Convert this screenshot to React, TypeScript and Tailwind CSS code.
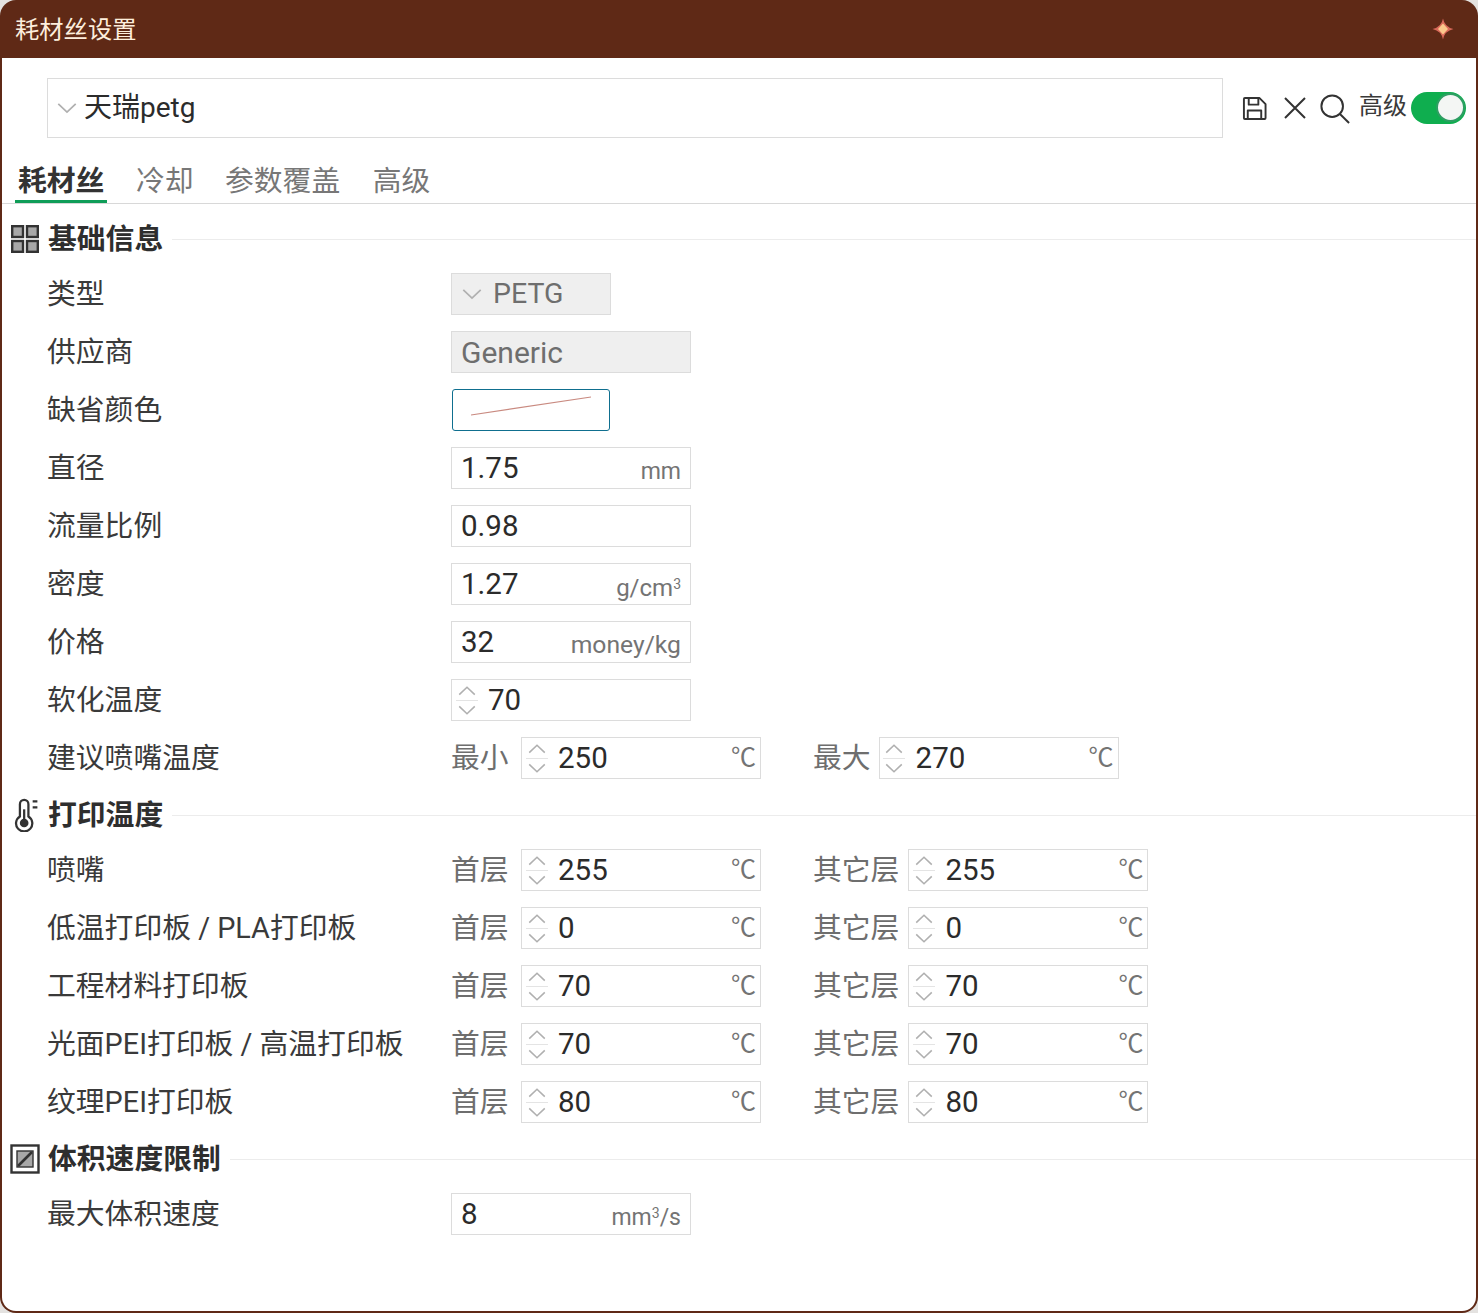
const FONT = "font-['Roboto','Noto_Sans_CJK_SC',sans-serif]";

function Chevron({ up = false, className = "" }: { up?: boolean; className?: string }) {
  return (
    <svg viewBox="0 0 22 12" className={className} fill="none" stroke="#b0b0b0" strokeWidth="1.9">
      <path d={up ? "M1.5 11 L11 2 L20.5 11" : "M1.5 1 L11 10 L20.5 1"} />
    </svg>
  );
}

function Spin() {
  return (
    <div className="flex h-full w-[26px] shrink-0 flex-col items-center justify-center pl-[3px]">
      <Chevron up className="h-[11px] w-[18px]" />
      <div className="my-[4px] h-px w-[22px] bg-[#e4e4e4]" />
      <Chevron className="h-[11px] w-[18px]" />
    </div>
  );
}

function Unit({ size = "text-[24px]", children }: { size?: string; children: React.ReactNode }) {
  return <span className={`ml-auto mt-[7px] leading-none text-[#747474] ${size}`}>{children}</span>;
}

function TextInput({ value, unit, unitSize }: { value: string; unit?: React.ReactNode; unitSize?: string }) {
  return (
    <div className="mt-[2px] flex h-[42px] w-[240px] items-center border border-[#dcdcdc] bg-white pl-[9px] pr-[9px] text-[29.5px] text-[#2b2b2b]">
      <span>{value}</span>
      {unit && <Unit size={unitSize}>{unit}</Unit>}
    </div>
  );
}

function SpinInput({ value, unit = true }: { value: string; unit?: boolean }) {
  return (
    <div className="mt-[2px] flex h-[42px] w-[240px] items-center border border-[#dcdcdc] bg-white pr-[4px] text-[29.5px] text-[#2b2b2b]">
      <Spin />
      <span className="ml-[10px]">{value}</span>
      {unit && <span className="mb-[2px] ml-auto text-[25px] leading-none text-[#747474]">℃</span>}
    </div>
  );
}

function Row({ label, children }: { label: string; children: React.ReactNode }) {
  return (
    <div className="flex h-[58px] items-center pl-[45px]">
      <div className="mt-[4px] w-[404px] shrink-0 text-[28.8px] text-[#3a3a3a]">{label}</div>
      {children}
    </div>
  );
}

function Pair({ a, b, second = "其它层", gap = "mr-[9px]" }: { a: string; b: string; second?: string; gap?: string }) {
  return (
    <>
      <span className="mr-[12px] mt-[4px] w-[58px] text-[28.8px] text-[#6e6e6e]">{second === "最大" ? "最小" : "首层"}</span>
      <SpinInput value={a} />
      <span className={`ml-[52px] mt-[4px] text-[28.8px] text-[#6e6e6e] ${gap}`}>{second}</span>
      <SpinInput value={b} />
    </>
  );
}

function Header({ icon, title }: { icon: React.ReactNode; title: string }) {
  return (
    <div className="flex h-[54px] items-center pl-[8px] pt-[2px]">
      <div className="mt-[2px] flex w-[38px] shrink-0 justify-start">{icon}</div>
      <span className="mt-[4px] text-[28.8px] font-bold text-[#2e2e2e]">{title}</span>
      <div className="ml-[9px] mt-[2px] h-px flex-1 bg-[#ececec]" />
    </div>
  );
}

const GridIcon = (
  <svg className="ml-px" width="28" height="28" viewBox="0 0 28 28" fill="#a8a8a8" stroke="#333" strokeWidth="2.4">
    <rect x="1.2" y="1.2" width="10.8" height="10.8" />
    <rect x="16" y="1.2" width="10.8" height="10.8" />
    <rect x="1.2" y="16" width="10.8" height="10.8" />
    <rect x="16" y="16" width="10.8" height="10.8" />
  </svg>
);

const ThermoIcon = (
  <svg width="26" height="34" viewBox="0 0 26 36" fill="none" stroke="#333" strokeWidth="2.4" className="ml-[4px]">
    <path d="M5.5 19.5 V6.5 a4.5 4.5 0 0 1 9 0 V19.5 a8.6 8.6 0 1 1 -9 0 Z" />
    <circle cx="10" cy="26.5" r="3.4" fill="#333" />
    <path d="M10 24 V12" />
    <path d="M19 3.5 H24 M19 10 H24" />
  </svg>
);

const VolumeIcon = (
  <svg width="30" height="30" viewBox="0 0 30 30" fill="none">
    <rect x="1.5" y="1.5" width="27" height="27" stroke="#333" strokeWidth="2.4" />
    <rect x="7" y="7" width="16" height="16" fill="#a8a8a8" stroke="#333" strokeWidth="1.4" />
    <path d="M8 22 L22 8" stroke="#333" strokeWidth="2.6" />
  </svg>
);

export default function App() {
  return (
    <div className={`${FONT} h-[1313px] w-[1478px] overflow-hidden bg-[#e4e2e0]`}>
      <div className="flex h-full flex-col overflow-hidden rounded-[16px] bg-[#5f2916]">
        <div className="flex h-[58px] shrink-0 items-center pl-[15px] pr-[24px]">
          <span className="mt-[2px] text-[24.3px] text-[#fdeedd]">耗材丝设置</span>
          <svg className="ml-auto" width="22" height="22" viewBox="0 0 22 22">
            <path d="M11 0.5 Q12.5 9 21.5 11 Q12.5 13 11 21.5 Q9.5 13 0.5 11 Q9.5 9 11 0.5 Z" fill="#d9695a" />
            <path d="M11 5.5 L16 11 L11 16.5 L6 11 Z" fill="#fbc88c" />
          </svg>
        </div>
        <div className="mx-[2px] mb-[2px] flex-1 overflow-hidden rounded-b-[14px] bg-white">
          <div className="flex items-center pl-[45px] pt-[20px]">
            <div className="flex h-[60px] w-[1176px] items-center border border-[#dcdcdc] pl-[8px] text-[28px] text-[#2b2b2b]">
              <Chevron className="mt-[1px] h-[11px] w-[22px]" />
              <span className="ml-[6px]">天瑞petg</span>
            </div>
            <svg className="ml-[19px]" width="25" height="25" viewBox="0 0 26 26" fill="none" stroke="#333" strokeWidth="2" strokeLinejoin="round">
              <path d="M2 3 a1 1 0 0 1 1 -1 H18 L24.5 8.5 V23 a1 1 0 0 1 -1 1 H3 a1 1 0 0 1 -1 -1 Z" />
              <path d="M7 2 V9 H17 V2 M6 24 V15 H20 V24" />
            </svg>
            <svg className="ml-[17px]" width="22" height="22" viewBox="0 0 22 22" fill="none" stroke="#333" strokeWidth="2">
              <path d="M1 1 L21 21 M21 1 L1 21" />
            </svg>
            <svg className="ml-[14px] mt-[2px]" width="30" height="30" viewBox="0 0 32 32" fill="none" stroke="#333" strokeWidth="2.1">
              <circle cx="13" cy="13" r="11.5" />
              <path d="M21 21 L31 31" />
            </svg>
            <span className="mb-[4px] ml-[9px] text-[24px] leading-none text-[#3a3a3a]">高级</span>
            <div className="ml-[4px] mb-[1px] flex h-[32px] w-[55px] items-center justify-end rounded-full bg-[#0fae4f] pr-[1px]">
              <div className="h-[29px] w-[29px] rounded-full border-2 border-[#2f9e63] bg-[#f4f6f4]" />
            </div>
          </div>

          <div className="mt-[22px] flex h-[44px] items-end gap-[25.5px] border-b border-[#d8d8d8] pl-[13px] text-[28.8px] leading-none">
            <div className="border-b-[3px] border-[#0f9d58] px-[3px] pb-[4px] font-bold text-[#333]">耗材丝</div>
            <div className="border-b-[3px] border-transparent px-[3px] pb-[4px] text-[#777]">冷却</div>
            <div className="border-b-[3px] border-transparent px-[3px] pb-[4px] text-[#777]">参数覆盖</div>
            <div className="ml-[1px] border-b-[3px] border-transparent px-[3px] pb-[4px] text-[#777]">高级</div>
          </div>

          <div className="pt-[6px]">
            <Header icon={GridIcon} title="基础信息" />
            <Row label="类型">
              <div className="mt-[2px] flex h-[42px] w-[160px] items-center border border-[#dcdcdc] bg-[#efefef] pl-[8px] text-[28.5px] text-[#6e6e6e]">
                <Chevron className="h-[11px] w-[24px]" />
                <span className="ml-[9px]">PETG</span>
              </div>
            </Row>
            <Row label="供应商">
              <div className="mt-[2px] flex h-[42px] w-[240px] items-center border border-[#dcdcdc] bg-[#efefef] pl-[9px] text-[30px] text-[#6e6e6e]">
                <span>Generic</span>
              </div>
            </Row>
            <Row label="缺省颜色">
              <div className="ml-px mt-[2px] h-[42px] w-[158px] rounded-[3px] border border-[#0f6f8f] bg-white">
                <svg width="156" height="40" viewBox="0 0 156 40" fill="none">
                  <path d="M18 25 L138 7" stroke="#c98a80" strokeWidth="1.2" />
                </svg>
              </div>
            </Row>
            <Row label="直径"><TextInput value="1.75" unit="mm" unitSize="text-[23px]" /></Row>
            <Row label="流量比例"><TextInput value="0.98" /></Row>
            <Row label="密度">
              <TextInput value="1.27" unit={<>g/cm<sup className="text-[14px]">3</sup></>} />
            </Row>
            <Row label="价格"><TextInput value="32" unit="money/kg" unitSize="text-[24.7px]" /></Row>
            <Row label="软化温度"><SpinInput value="70" unit={false} /></Row>
            <Row label="建议喷嘴温度"><Pair a="250" b="270" second="最大" gap="mr-[8px]" /></Row>

            <Header icon={ThermoIcon} title="打印温度" />
            <Row label="喷嘴"><Pair a="255" b="255" /></Row>
            <Row label="低温打印板 / PLA打印板"><Pair a="0" b="0" /></Row>
            <Row label="工程材料打印板"><Pair a="70" b="70" /></Row>
            <Row label="光面PEI打印板 / 高温打印板"><Pair a="70" b="70" /></Row>
            <Row label="纹理PEI打印板"><Pair a="80" b="80" /></Row>

            <Header icon={VolumeIcon} title="体积速度限制" />
            <Row label="最大体积速度">
              <TextInput value="8" unit={<>mm<sup className="text-[14px]">3</sup>/s</>} unitSize="text-[23px]" />
            </Row>
          </div>
        </div>
      </div>
    </div>
  );
}
